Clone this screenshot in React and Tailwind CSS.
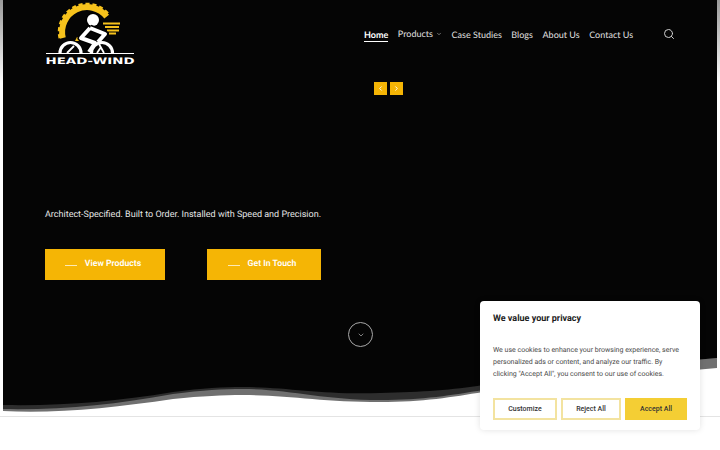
import { ChevronDown, ChevronLeft, ChevronRight, Search } from 'lucide-react'

const NAV = ['Case Studies', 'Blogs', 'About Us', 'Contact Us']

function Logo() {
  return (
    <svg width="92" height="66" viewBox="0 0 92 66" className="block">
      {/* gear */}
      <path d="M17.800 38 A25 25 0 0 1 61.700 16.600" fill="none" stroke="#f6c21c" strokeWidth="6" />
      <path d="M15.200 38 A27.500 27.500 0 0 1 63.700 15" fill="none" stroke="#f6c21c" strokeWidth="3.500" strokeDasharray="4 2.800" />
      {/* speed lines */}
      <path d="M58 23.500H75M60 27H74M62 30.500H74M64 33.500H71" stroke="#f6c21c" strokeWidth="1.800" />
      <path d="M32 37h6l-2 4h-6z" fill="#f6c21c" />
      {/* rider */}
      <circle cx="48" cy="20" r="6" fill="#000" stroke="#000" strokeWidth="3" />
      <circle cx="48" cy="20" r="6" fill="#fff" />
      <path d="M45 28 L60 34 L53 42 M45 28 L36 38 L50 43 L44 52" fill="none" stroke="#000" strokeWidth="7" strokeLinejoin="round" />
      <path d="M45 28 L60 34 L53 42 M45 28 L36 38 L50 43 L44 52" fill="none" stroke="#fff" strokeWidth="4" strokeLinejoin="round" />
      {/* wheels */}
      <path d="M15 53 A10.500 10.500 0 0 1 36 53" fill="none" stroke="#fff" strokeWidth="3.200" />
      <path d="M46.500 53 A10.500 10.500 0 0 1 67.500 53" fill="none" stroke="#fff" strokeWidth="3.200" />
      <path d="M22 53 L29 46 M54 44 L59 53 M52 53 L56 47" stroke="#fff" strokeWidth="1.800" />
      <path d="M1 53.500H89" stroke="#fff" strokeWidth="1" />
      <text x="45" y="63.500" textAnchor="middle" fill="#fff" fontFamily="DejaVu Sans" fontWeight="700" fontSize="8.800" textLength="89" lengthAdjust="spacingAndGlyphs">HEAD-WIND</text>
    </svg>
  )
}

function HeroButton({ label, width }) {
  return (
    <a className={`flex h-[31px] items-center justify-center gap-[8px] bg-[#f5b505] pr-[4px] pt-[1px] text-[8.700px] font-semibold text-white ${width}`}>
      <span className="h-px w-[12px] bg-white/70" />
      {label}
    </a>
  )
}

export default function App() {
  return (
    <div className="relative h-[450px] w-[720px] overflow-hidden bg-white font-['Roboto',sans-serif] [text-rendering:geometricPrecision]">
      <div className="flex h-[417px] flex-col border-b border-[#e4e4e4] bg-gradient-to-b from-[#9a9a9a] to-white to-[20%] px-[3px]">
        {/* Hero */}
        <section className="relative flex h-[416px] flex-col bg-[#050505]">
          <header className="flex items-start pl-[42px] pr-[42px]">
            <Logo />
            <nav className="ml-[227px] mt-[27px] flex items-center gap-[9.500px] whitespace-nowrap font-['Lato',sans-serif] text-[9px] font-medium text-[#d6d6d6]">
              <a className="border-b border-white font-bold text-white">Home</a>
              <a className="flex items-center gap-[3px] pb-[2px]">
                Products
                <ChevronDown size={6} />
              </a>
              {NAV.map((item) => (
                <a key={item}>{item}</a>
              ))}
            </nav>
            <Search size={12} className="ml-auto mt-[28px] text-[#cfcfcf]" />
          </header>

          <div className="ml-[370.500px] mt-[16px] flex gap-[3px]">
            <button className="flex h-[13px] w-[13px] items-center justify-center bg-[#f5b505] text-white">
              <ChevronLeft size={7} strokeWidth={3} />
            </button>
            <button className="flex h-[13px] w-[13px] items-center justify-center bg-[#f5b505] text-white">
              <ChevronRight size={7} strokeWidth={3} />
            </button>
          </div>

          <p className="ml-[42px] mt-[113px] text-[9px] leading-[14px] text-[#e4e4e4]">
            Architect-Specified. Built to Order. Installed with Speed and Precision.
          </p>

          <div className="ml-[42px] mt-[27px] flex gap-[42px]">
            <HeroButton label="View Products" width="w-[120px]" />
            <HeroButton label="Get In Touch" width="w-[114px]" />
          </div>

          <div className="ml-[345px] mt-[42px] flex h-[25px] w-[25px] items-center justify-center rounded-full border border-[#a8a8a8] text-[#bdbdbd]">
            <ChevronDown size={8} />
          </div>

          {/* wave at bottom of hero */}
          <svg viewBox="0 0 714 60" preserveAspectRatio="none" className="absolute bottom-0 left-0 h-[60px] w-[714px]">
            <path d="M0 49 C 60 50 110 46 170 36 C 200 32 220 31 240 31 C 285 31 320 39 377 37 C 420 36 450 34 480 29 C 560 20 640 8 714 2 V60 H0 Z" fill="#2d2d2d" />
            <path d="M0 53 C 60 54 110 49 170 38 C 200 34 220 33 240 33 C 285 33 320 44 377 44 C 420 44 450 39 480 34 C 560 24 640 8 714 2 V60 H0 Z" fill="#707070" />
            <path d="M0 55 C 50 58 110 52 170 43 C 200 40 220 39 240 39 C 285 39 320 46 377 46 C 420 46 450 41 480 36 C 560 28 640 18 714 12 V60 H0 Z" fill="#ffffff" />
          </svg>
        </section>
      </div>

      {/* Cookie banner */}
      <aside className="absolute left-[480px] top-[301px] w-[220px] rounded-[4px] bg-white px-[13px] pb-[10px] pt-[11px] shadow-[0_0_6px_rgba(0,0,0,0.12)]">
        <h2 className="text-[9px] font-bold leading-[14px] text-[#212121]">We value your privacy</h2>
        <p className="mt-[18px] text-[7px] leading-[12px] text-[#4a4a4a]">
          We use cookies to enhance your browsing experience, serve personalized ads or content, and analyze our traffic. By clicking "Accept All", you consent to our use of cookies.
        </p>
        <div className="mt-[18px] flex gap-[4px] text-[7px] font-medium text-[#333333]">
          <button className="h-[22px] w-[64px] border-2 border-[#f3e3a0]">Customize</button>
          <button className="h-[22px] w-[60px] border-2 border-[#f3e3a0]">Reject All</button>
          <button className="h-[22px] w-[62px] bg-[#f4ce34]">Accept All</button>
        </div>
      </aside>
    </div>
  )
}
